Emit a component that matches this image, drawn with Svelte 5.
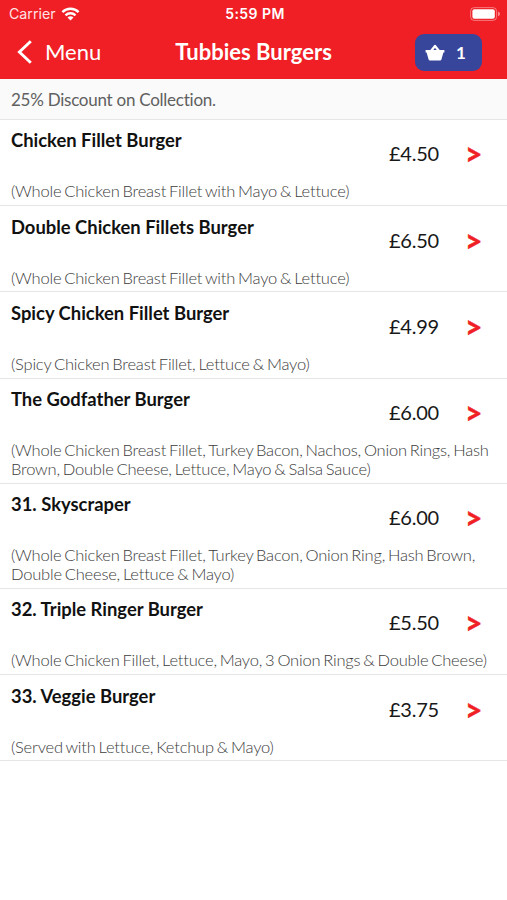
<script>
  const items = [
    { name: 'Chicken Fillet Burger', price: '£4.50', lines: ['(Whole Chicken Breast Fillet with Mayo & Lettuce)'] },
    { name: 'Double Chicken Fillets Burger', price: '£6.50', lines: ['(Whole Chicken Breast Fillet with Mayo & Lettuce)'] },
    { name: 'Spicy Chicken Fillet Burger', price: '£4.99', lines: ['(Spicy Chicken Breast Fillet, Lettuce & Mayo)'] },
    {
      name: 'The Godfather Burger',
      price: '£6.00',
      lines: [
        '(Whole Chicken Breast Fillet, Turkey Bacon, Nachos, Onion Rings, Hash',
        'Brown, Double Cheese, Lettuce, Mayo & Salsa Sauce)'
      ]
    },
    {
      name: '31. Skyscraper',
      price: '£6.00',
      lines: [
        '(Whole Chicken Breast Fillet, Turkey Bacon, Onion Ring, Hash Brown,',
        'Double Cheese, Lettuce & Mayo)'
      ]
    },
    { name: '32. Triple Ringer Burger', price: '£5.50', lines: ['(Whole Chicken Fillet, Lettuce, Mayo, 3 Onion Rings & Double Cheese)'] },
    { name: '33. Veggie Burger', price: '£3.75', lines: ['(Served with Lettuce, Ketchup & Mayo)'] }
  ];
</script>

<div class="screen">
  <header>
    <div class="status">
      <div class="carrier">
        <span>Carrier</span>
        <svg width="19" height="14" viewBox="0 0 18 14" fill="none" stroke="#fff" stroke-width="2.4">
          <path d="M.9 5.1a11.6 11.6 0 0 1 16.2 0" />
          <path d="M4 8.3a7.2 7.2 0 0 1 10 0" />
          <path d="M9 13.6 6 10.6a4.3 4.3 0 0 1 6 0z" fill="#fff" stroke="none" />
        </svg>
      </div>
      <span class="time">5:59 PM</span>
      <svg class="battery" width="31" height="14" viewBox="0 0 31 14">
        <rect x=".6" y=".6" width="26" height="12.8" rx="3.6" fill="none" stroke="#fff" stroke-opacity=".4" />
        <rect x="2.4" y="2.3" width="22.4" height="9.4" rx="2" fill="#fff" />
        <path d="M28.2 4.8c2.1.6 2.1 3.8 0 4.4z" fill="#fff" fill-opacity=".6" />
      </svg>
    </div>
    <nav>
      <div class="back">
        <svg width="16" height="24" viewBox="0 0 16 24" fill="none" stroke="#fff" stroke-width="2.9">
          <path d="M13.800 1.200 2.400 12l11.400 10.800" />
        </svg>
        <span>Menu</span>
      </div>
      <h1>Tubbies Burgers</h1>
      <div class="basket">
        <svg width="20" height="17" viewBox="0 0 20 17">
          <path d="M6 7 10 2l4 5" fill="none" stroke="#fff" stroke-width="2.3" stroke-linejoin="round" />
          <path d="M.6 6.100h18.800v2.400h-1l-2 7.100q-.2.800-1 .800H4.600q-.8 0-1-.8l-2-7.100h-1z" fill="#fff" />
        </svg>
        <span>1</span>
      </div>
    </nav>
  </header>
  <p class="notice">25% Discount on Collection.</p>
  <main>
    {#each items as item}
      <article>
        <div class="top">
          <h2>{item.name}</h2>
          <span class="price">{item.price}</span>
          <span class="arrow">&gt;</span>
        </div>
        <div class="desc">
          {#each item.lines as line}<div>{line}</div>{/each}
        </div>
      </article>
    {/each}
  </main>
</div>

<style>
  :global(body) { background: #fff; }
  .screen {
    width: 507px;
    height: 900px;
    overflow: hidden;
    background: #fff;
    font-family: Lato, "Liberation Sans", sans-serif;
    font-variant-ligatures: none;
    white-space: nowrap;
  }
  header { box-sizing: border-box; height: 79px; background: #ef1f25; color: #fff; }
  .status {
    display: grid;
    grid-template-columns: 1fr auto 1fr;
    align-items: center;
    height: 24px;
    padding: 3px 6px 0 9px;
    box-sizing: border-box;
    font: 14.2px/20px Inter, "Liberation Sans", sans-serif;
  }
  .carrier { display: flex; align-items: center; gap: 5px; color: #ffe3e4; }
  .time { font-weight: 600; font-size: 14px; letter-spacing: .45px; }
  .battery { justify-self: end; }
  nav {
    display: grid;
    grid-template-columns: 1fr auto 1fr;
    align-items: center;
    height: 56px;
    padding: 0 17px;
  }
  .back { display: flex; align-items: center; gap: 12px; font-size: 22px; }
  .back span { margin-bottom: 2px; }
  h1 { margin: 0 0 1px; font-size: 22px; line-height: 28px; font-weight: 700; }
  .basket {
    justify-self: end;
    box-sizing: border-box;
    display: flex;
    align-items: center;
    gap: 11px;
    width: 67px;
    height: 37px;
    margin-right: 8px;
    padding-left: 10px;
    border-radius: 9px;
    background: #37459b;
    font-size: 17px;
    font-weight: 700;
  }
  .notice {
    box-sizing: border-box;
    height: 41px;
    margin: 0;
    padding: 1px 11px 0;
    border-bottom: 1px solid #e6e6e6;
    background: #fafafa;
    color: #606060;
    font-size: 17px;
    line-height: 39px;
    letter-spacing: -.25px;
  }
  article { box-sizing: border-box; padding: 9.4px 11px 3.7px; border-bottom: 1px solid #e6e6e6; }
  .top { display: flex; align-items: flex-start; height: 53px; }
  h2 { flex: 1; margin: 0; font-size: 18.4px; line-height: 22px; font-weight: 700; color: #111; }
  .price { width: 76px; padding-top: 12px; font-size: 20px; line-height: 24px; letter-spacing: -.25px; color: #181818; }
  .arrow {
    width: 31px;
    padding-top: 12px;
    font-size: 30px;
    line-height: 24px;
    font-weight: 700;
    color: #ef1f25;
    -webkit-text-stroke: .5px #ef1f25;
  }
  .desc {
    font-size: 16.5px;
    line-height: 19.1px;
    letter-spacing: -.2px;
    word-spacing: -1.35px;
    font-weight: 300;
    color: #3c3c3c;
  }
</style>
